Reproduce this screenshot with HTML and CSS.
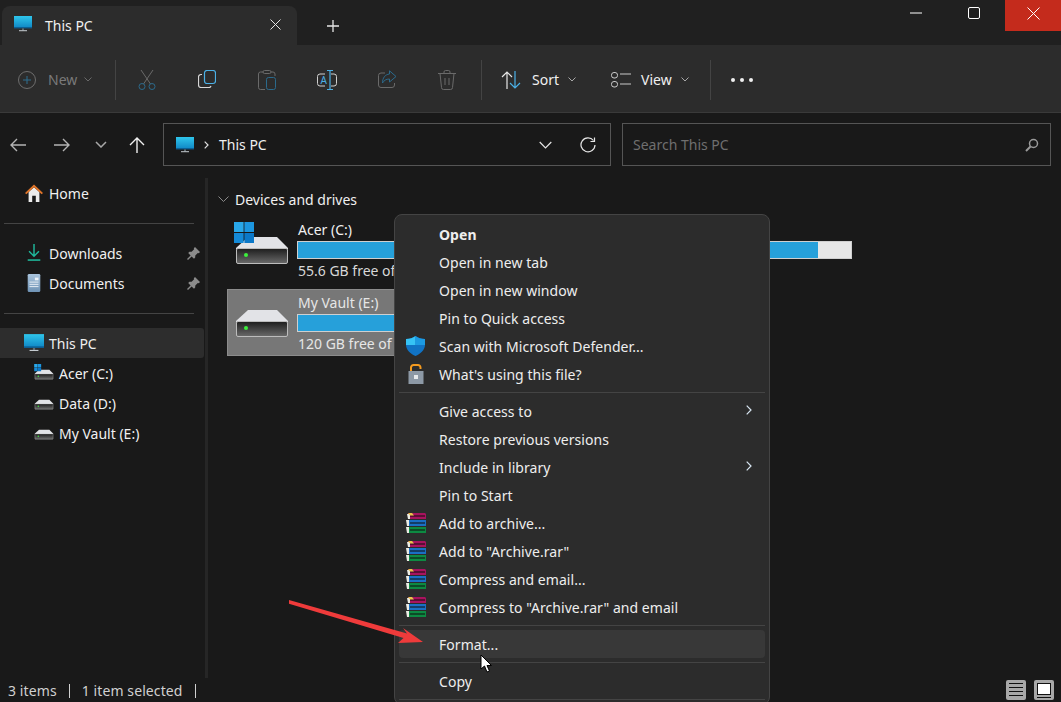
FILE: index.html
```html
<!DOCTYPE html>
<html lang="en">
<head>
  <meta charset="UTF-8">
  <meta name="viewport" content="width=device-width, initial-scale=1.0">
  <title>This PC</title>
  <link rel="stylesheet" href="styles.css">
</head>
<body>

  <!-- shared icons -->
  <svg class="defs" width="0" height="0">
    <defs>
      <linearGradient id="screen" x1="0" y1="0" x2="0" y2="1">
        <stop offset="0" stop-color="#2fc6ec"/>
        <stop offset="1" stop-color="#0f86c4"/>
      </linearGradient>
      <linearGradient id="driveFace" x1="0" y1="0" x2="0" y2="1">
        <stop offset="0" stop-color="#1d1d1d"/>
        <stop offset="1" stop-color="#6a6a6a"/>
      </linearGradient>
      <linearGradient id="page" x1="0" y1="0" x2="0" y2="1">
        <stop offset="0" stop-color="#a9c4dd"/>
        <stop offset="1" stop-color="#6f93b5"/>
      </linearGradient>
      <symbol id="monitor" viewBox="0 0 18 16">
        <rect x="0" y="0" width="18" height="12" fill="url(#screen)"/>
        <rect x="0" y="11" width="18" height="1.4" fill="#0b5f94"/>
        <rect x="8" y="12.4" width="2" height="2" fill="#5e6a72"/>
        <rect x="5" y="14.2" width="8" height="1" fill="#c5cbd0"/>
      </symbol>
      <symbol id="drive" viewBox="0 0 56 48">
        <path d="M14 15H43L54 26V27H2V26Z" fill="#e2e3e7"/>
        <rect x="2.5" y="26.5" width="51" height="15" rx="1.5" fill="url(#driveFace)" stroke="#bcbcbc"/>
        <circle cx="12" cy="33" r="2" fill="#3cf03c"/>
      </symbol>
      <symbol id="winlogo" viewBox="0 0 20 21">
        <rect x="0" y="0" width="9.6" height="10" fill="#29a8ea"/>
        <rect x="10.4" y="0" width="9.6" height="10" fill="#1c96e0"/>
        <rect x="0" y="11" width="9.6" height="10" fill="#148ad8"/>
        <rect x="10.4" y="11" width="9.6" height="10" fill="#0b78c8"/>
      </symbol>
      <symbol id="pin" viewBox="0 0 13 13">
        <path d="M8 0L13 5L11.8 6.2L10.8 5.9L8.3 8.4L8.2 10.6L7 11.8L4.6 9.4L1 13L0 12L3.6 8.4L1.2 6L2.4 4.8L4.6 4.7L7.1 2.2L6.8 1.2Z" fill="#8b8b8b"/>
      </symbol>
      <symbol id="chev" viewBox="0 0 8 5">
        <path d="M.5 .5L4 4L7.5 .5" fill="none" stroke="currentColor"/>
      </symbol>
      <symbol id="rar" viewBox="0 0 20 20">
        <path d="M2 0H19L20 1V6H2Z" fill="#a8135f"/>
        <path d="M2 7H20V13H2Z" fill="#1a6fc4"/>
        <path d="M2 14H20V20H2Z" fill="#0d8a42"/>
        <path d="M1 1H4V6H2ZM0 7H3V13H1ZM0 14H3V20H1Z" fill="#ecece4"/>
        <path d="M4 3H19M4 10H19M4 17H19" stroke="#0d0d0d" stroke-width="1"/>
        <path d="M2 0H6L8 2.500H4Z" fill="#e9c54a"/>
      </symbol>
    </defs>
  </svg>

  <div class="window">

    <div class="tabbar">
      <div class="tab">
        <svg class="tab-icon"><use href="#monitor"/></svg>
        <span class="tab-title">This PC</span>
        <svg class="tab-close" viewBox="0 0 11 11"><path d="M.5 .5L10.5 10.5M10.5 .5L.5 10.5" stroke="#e6e6e6" fill="none"/></svg>
      </div>
      <svg class="tab-plus" viewBox="0 0 12 12"><path d="M6 0V12M0 6H12" stroke="#e6e6e6" stroke-width="1.3" fill="none"/></svg>
      <div class="win-controls">
        <div class="win-btn"><svg width="12" height="12" viewBox="0 0 12 12"><path d="M0 6H12" stroke="#fff"/></svg></div>
        <div class="win-btn"><svg width="12" height="12" viewBox="0 0 12 12"><rect x=".5" y=".5" width="11" height="11" rx="1.5" fill="none" stroke="#fff"/></svg></div>
        <div class="win-btn win-close"><svg width="13" height="13" viewBox="0 0 13 13"><path d="M.5 .5L12.5 12.5M12.5 .5L.5 12.5" stroke="#fff" fill="none"/></svg></div>
      </div>
    </div>

    <div class="toolbar">
      <div class="tool-new">
        <svg width="18" height="18" viewBox="0 0 18 18"><circle cx="9" cy="9" r="8.5" fill="none" stroke="#6e6e6e"/><path d="M9 5V13M5 9H13" stroke="#2f6f8f" fill="none"/></svg>
        <span>New</span>
        <svg class="chev"><use href="#chev"/></svg>
      </div>
      <div class="tool-sep"></div>
      <div class="tool-icons">
        <div class="tool-icon">
          <svg width="18" height="20" viewBox="0 0 18 20"><path d="M3 0L12.5 14M15 0L5.5 14" stroke="#6a6a6a" fill="none"/><circle cx="4" cy="16.5" r="3" stroke="#2b6a8c" fill="none"/><circle cx="14" cy="16.5" r="3" stroke="#2b6a8c" fill="none"/></svg>
        </div>
        <div class="tool-icon">
          <svg width="18" height="18" viewBox="0 0 18 18"><rect x="6.5" y=".5" width="11" height="13" rx="2.5" fill="none" stroke="#4bb0e6" stroke-width="1.2"/><path d="M4 4.5H3A2.5 2.5 0 0 0 .5 7V15A2.5 2.5 0 0 0 3 17.5H10A2.5 2.5 0 0 0 13 16" fill="none" stroke="#d8d8d8" stroke-width="1.2"/></svg>
        </div>
        <div class="tool-icon">
          <svg width="18" height="20" viewBox="0 0 18 20"><path d="M5 2H2.500A2 2 0 0 0 .5 4V17.500A2 2 0 0 0 2.500 19.500H7M13 2H15A2 2 0 0 1 17 4V6" fill="none" stroke="#6a6a6a"/><rect x="5" y=".5" width="8" height="3" rx="1.500" fill="none" stroke="#6a6a6a"/><rect x="8.500" y="7.500" width="9" height="12" rx="2" fill="none" stroke="#2b6a8c"/></svg>
        </div>
        <div class="tool-icon">
          <svg width="20" height="20" viewBox="0 0 20 20"><path d="M8 4H3A2.500 2.500 0 0 0 .5 6.500V13.500A2.500 2.500 0 0 0 3 16H8M14 4H17A2.500 2.500 0 0 1 19.500 6.500V13.500A2.500 2.500 0 0 1 17 16H14" fill="none" stroke="#d0d0d0"/><path d="M10 .5H16M10 19.500H16M13 .5V19.500" fill="none" stroke="#4bb0e6" stroke-width="1.200"/><text class="rename-a" x="3.500" y="13.500">A</text></svg>
        </div>
        <div class="tool-icon">
          <svg width="19" height="18" viewBox="0 0 19 18"><path d="M7 3H3A2.500 2.500 0 0 0 .5 5.500V15A2.500 2.500 0 0 0 3 17.500H14A2.500 2.500 0 0 0 16.500 15V13" fill="none" stroke="#6a6a6a"/><path d="M11.500 .8L18 6.500L11.500 12V9C8 9 6 10.500 4.500 13C4.500 8 7 4.500 11.500 4Z" fill="none" stroke="#2b6a8c"/></svg>
        </div>
        <div class="tool-icon">
          <svg width="18" height="20" viewBox="0 0 18 20"><path d="M0 3.500H18M6 3.500V2A1.500 1.500 0 0 1 7.500 .5H10.500A1.500 1.500 0 0 1 12 2V3.500M2 3.500L3.500 17.500A2 2 0 0 0 5.500 19.500H12.500A2 2 0 0 0 14.500 17.500L16 3.500M7 8V15M11 8V15" fill="none" stroke="#6a6a6a"/></svg>
        </div>
      </div>
      <div class="tool-sep tool-sep-b"></div>
      <div class="tool-btn tool-sort">
        <svg width="20" height="18" viewBox="0 0 20 18"><path d="M6 18V1M1 6L6 1L11 6" fill="none" stroke="#e6e6e6" stroke-width="1.200"/><path d="M14 0V17M9 12L14 17L19 12" fill="none" stroke="#4bb0e6" stroke-width="1.200"/></svg>
        <span class="tool-label">Sort</span>
        <svg class="chev"><use href="#chev"/></svg>
      </div>
      <div class="tool-btn tool-view">
        <svg width="20" height="16" viewBox="0 0 20 16"><rect x=".5" y=".5" width="6" height="5.500" rx="2.500" fill="none" stroke="#c8c8c8"/><rect x=".5" y="9.500" width="6" height="5.500" rx="2.500" fill="none" stroke="#c8c8c8"/><path d="M9 2H20M9 12H20" stroke="#c8c8c8" fill="none"/></svg>
        <span class="tool-label">View</span>
        <svg class="chev"><use href="#chev"/></svg>
      </div>
      <div class="tool-sep tool-sep-c"></div>
      <div class="tool-more"><i></i><i></i><i></i></div>
    </div>

    <div class="addressbar">
      <div class="nav">
        <svg class="nav-back" width="16" height="14" viewBox="0 0 16 14"><path d="M16 7H1M7 1L1 7L7 13" fill="none" stroke="#b4b4b4" stroke-width="1.400"/></svg>
        <svg class="nav-fwd" width="16" height="14" viewBox="0 0 16 14"><path d="M0 7H15M9 1L15 7L9 13" fill="none" stroke="#b4b4b4" stroke-width="1.400"/></svg>
        <svg class="nav-down" width="12" height="7" viewBox="0 0 12 7"><path d="M1 1L6 6L11 1" fill="none" stroke="#a8a8a8" stroke-width="1.500"/></svg>
        <svg class="nav-up" width="16" height="16" viewBox="0 0 16 16"><path d="M8 16V1M1 8L8 1L15 8" fill="none" stroke="#f0f0f0" stroke-width="1.400"/></svg>
      </div>
      <div class="address">
        <svg class="addr-icon"><use href="#monitor"/></svg>
        <svg class="addr-sep" width="5" height="8" viewBox="0 0 5 8"><path d="M.7 .7L4 4L.7 7.300" fill="none" stroke="#e0e0e0" stroke-width="1.200"/></svg>
        <span class="addr-text">This PC</span>
        <svg class="addr-chev" width="13" height="8" viewBox="0 0 13 8"><path d="M.7 1L6.500 6.800L12.300 1" fill="none" stroke="#e6e6e6" stroke-width="1.200"/></svg>
        <svg class="addr-refresh" width="16" height="16" viewBox="0 0 16 16"><path d="M13.500 3.500A7 7 0 1 0 15 8" fill="none" stroke="#e6e6e6" stroke-width="1.200"/><path d="M14.500 .5V4.500H10.500" fill="none" stroke="#e6e6e6" stroke-width="1.200"/></svg>
      </div>
      <div class="search">
        <span>Search This PC</span>
        <svg width="14" height="14" viewBox="0 0 14 14"><circle cx="8.500" cy="5.500" r="4" fill="none" stroke="#9a9a9a" stroke-width="1.500"/><path d="M5.500 8.500L1 13" stroke="#9a9a9a" stroke-width="2" fill="none"/></svg>
      </div>
    </div>

    <div class="main">
      <nav class="sidebar">
        <div class="side-row">
          <svg class="side-icon" viewBox="0 0 20 20">
            <path d="M4 9L10 3.500L16 9V20H12V13H8V20H4Z" fill="#ececec"/>
            <path d="M0 10L10 .5L20 10L18.500 11.500L10 3.500L1.500 11.500Z" fill="#e0752a"/>
          </svg>
          <span>Home</span>
        </div>
        <div class="side-sep"></div>
        <div class="side-row">
          <svg class="side-icon" viewBox="0 0 20 20"><path d="M10 0V13M4.500 8L10 13.500L15.500 8" fill="none" stroke="#1fb99c" stroke-width="1.600"/><rect x="3" y="17" width="14" height="1.700" fill="#1fb99c"/></svg>
          <span>Downloads</span>
          <svg class="pin"><use href="#pin"/></svg>
        </div>
        <div class="side-row">
          <svg class="side-icon" viewBox="0 0 20 20"><rect x="3" y="0" width="14" height="20" rx="1.500" fill="url(#page)"/><path d="M5 9H15M5 11.500H15M5 14H15" stroke="#eef3f8"/><rect x="11" y="4" width="4" height="3" fill="#eef3f8"/></svg>
          <span>Documents</span>
          <svg class="pin"><use href="#pin"/></svg>
        </div>
        <div class="side-sep"></div>
        <div class="side-row side-active">
          <svg class="side-icon"><use href="#monitor"/></svg>
          <span>This PC</span>
        </div>
        <div class="side-row side-sub">
          <svg class="side-icon"><use href="#drive"/><use href="#winlogo" width="7.500" height="7.500"/></svg>
          <span>Acer (C:)</span>
        </div>
        <div class="side-row side-sub">
          <svg class="side-icon"><use href="#drive"/></svg>
          <span>Data (D:)</span>
        </div>
        <div class="side-row side-sub">
          <svg class="side-icon"><use href="#drive"/></svg>
          <span>My Vault (E:)</span>
        </div>
      </nav>
      <div class="divider"></div>
      <section class="content">
        <div class="group-head">
          <svg width="11" height="6" viewBox="0 0 11 6"><path d="M.5 .5L5.500 5.500L10.500 .5" fill="none" stroke="#8a8a8a"/></svg>
          <span>Devices and drives</span>
        </div>
        <div class="drive-tile">
          <svg class="drive-icon"><use href="#drive"/><use href="#winlogo" width="20" height="21"/></svg>
          <div class="drive-info">
            <div class="drive-name">Acer (C:)</div>
            <div class="drive-bar"><div class="drive-used drive-used-c"></div></div>
            <div class="drive-free">55.6 GB free of 476 GB</div>
          </div>
        </div>
        <div class="drive-tile drive-selected">
          <svg class="drive-icon"><use href="#drive"/></svg>
          <div class="drive-info">
            <div class="drive-name">My Vault (E:)</div>
            <div class="drive-bar"><div class="drive-used drive-used-e"></div></div>
            <div class="drive-free">120 GB free of 465 GB</div>
          </div>
        </div>
      </section>
    </div>

    <div class="statusbar">
      <span>3 items</span>
      <span class="status-sep"></span>
      <span>1 item selected</span>
      <span class="status-sep"></span>
      <div class="status-views">
        <div class="view-btn view-list"><i></i><i></i><i></i><i></i></div>
        <div class="view-btn view-tile"><i></i></div>
      </div>
    </div>

    <!-- Menu de contexto -->
    <div class="menu">
      <div class="menu-row menu-bold"><span class="menu-icon"></span>Open</div>
      <div class="menu-row"><span class="menu-icon"></span>Open in new tab</div>
      <div class="menu-row"><span class="menu-icon"></span>Open in new window</div>
      <div class="menu-row"><span class="menu-icon"></span>Pin to Quick access</div>
      <div class="menu-row">
        <span class="menu-icon">
          <svg width="19" height="20" viewBox="0 0 19 20"><path d="M9.500 0C12 2 15 3 19 3V9C19 14 14 18 9.500 20C5 18 0 14 0 9V3C4 3 7 2 9.500 0Z" fill="#1173c4"/><path d="M9.500 0C7 2 4 3 0 3V9H9.500Z" fill="#36c3f5"/><path d="M9.500 0C12 2 15 3 19 3V9H9.500Z" fill="#1c9ae2"/></svg>
        </span>
        Scan with Microsoft Defender...
      </div>
      <div class="menu-row">
        <span class="menu-icon">
          <svg width="20" height="20" viewBox="0 0 20 20"><path d="M5 8V3.500A2.500 2.500 0 0 1 7.500 1H12A2.500 2.500 0 0 1 14.500 3.500V5" fill="none" stroke="#f39a1f" stroke-width="2"/><rect x="2.500" y="7" width="15" height="13" fill="#8d99a6"/><rect x="8" y="11" width="4" height="4" fill="#e6e9ec"/></svg>
        </span>
        What's using this file?
      </div>
      <div class="menu-sep"></div>
      <div class="menu-row"><span class="menu-icon"></span>Give access to<svg class="menu-arrow" width="6" height="10" viewBox="0 0 6 10"><path d="M.7 .7L5 5L.7 9.300" fill="none" stroke="#d8e6f2" stroke-width="1.200"/></svg></div>
      <div class="menu-row"><span class="menu-icon"></span>Restore previous versions</div>
      <div class="menu-row"><span class="menu-icon"></span>Include in library<svg class="menu-arrow" width="6" height="10" viewBox="0 0 6 10"><path d="M.7 .7L5 5L.7 9.300" fill="none" stroke="#d8e6f2" stroke-width="1.200"/></svg></div>
      <div class="menu-row"><span class="menu-icon"></span>Pin to Start</div>
      <div class="menu-row"><span class="menu-icon"><svg class="rar-icon"><use href="#rar"/></svg></span>Add to archive...</div>
      <div class="menu-row"><span class="menu-icon"><svg class="rar-icon"><use href="#rar"/></svg></span>Add to "Archive.rar"</div>
      <div class="menu-row"><span class="menu-icon"><svg class="rar-icon"><use href="#rar"/></svg></span>Compress and email...</div>
      <div class="menu-row"><span class="menu-icon"><svg class="rar-icon"><use href="#rar"/></svg></span>Compress to "Archive.rar" and email</div>
      <div class="menu-sep"></div>
      <div class="menu-row menu-hover"><span class="menu-icon"></span>Format...</div>
      <div class="menu-sep"></div>
      <div class="menu-row"><span class="menu-icon"></span>Copy</div>
      <div class="menu-sep"></div>
    </div>

    <!-- seta vermelha e cursor -->
    <svg class="red-arrow" width="140" height="50" viewBox="0 0 140 50">
      <path d="M0 0L118 33.500L114 28L134 42L109 43L114.500 38L-1 3.500Z" fill="#ef3b3b"/>
    </svg>
    <svg class="cursor" width="13" height="19" viewBox="0 0 13 19">
      <path d="M1 1V15L4.500 12L7 18L9.500 17L7 11.500H11.500Z" fill="#fff" stroke="#000"/>
    </svg>
  </div>

</body>
</html>
```

FILE: styles.css
```css
* {
  margin: 0;
  padding: 0;
  box-sizing: border-box;
}

body {
  background-color: #191919;
  font-family: "Noto Sans", Arial, sans-serif;
  font-size: 14px;
  color: #f0f0f0;
}

svg {
  display: block;
  flex-shrink: 0;
}

.defs {
  position: absolute;
}

.window {
  position: relative;
  width: 1061px;
  height: 702px;
  overflow: hidden;
  display: flex;
  flex-direction: column;
}

/* Tabs */
.tabbar {
  height: 45px;
  background-color: #202020;
  display: flex;
  align-items: flex-start;
  padding-left: 2px;
}

.tab {
  width: 295px;
  height: 39px;
  margin-top: 6px;
  background-color: #2c2c2c;
  border-radius: 8px 8px 0 0;
  display: flex;
  align-items: center;
  padding-left: 12px;
}

.tab-icon {
  width: 18px;
  height: 16px;
  margin-top: -3px;
}

.tab-title {
  margin-left: 13px;
  margin-top: -1px;
}

.tab-close {
  width: 11px;
  height: 11px;
  margin-left: auto;
  margin-right: 16px;
  margin-top: -3px;
}

.tab-plus {
  width: 12px;
  height: 12px;
  margin-top: 20px;
  margin-left: 30px;
}

.win-controls {
  margin-left: auto;
  display: flex;
}

.win-btn {
  width: 58px;
  height: 31px;
  display: flex;
  align-items: center;
  justify-content: center;
  padding-bottom: 6px;
  padding-right: 4px;
}

.win-close {
  width: 56px;
  background-color: #c42b1c;
  padding-bottom: 5px;
  padding-right: 0;
}

/* Toolbar */
.toolbar {
  height: 68px;
  background-color: #2c2c2c;
  border-bottom: 1px solid #3a3a3a;
  display: flex;
  align-items: center;
  padding-left: 18px;
  padding-top: 2px;
  color: #f0f0f0;
}

.chev {
  width: 8px;
  height: 5px;
  color: #a8a8a8;
}

.tool-new {
  width: 97px;
  display: flex;
  align-items: center;
  color: #7a7a7a;
}

.tool-new span {
  margin-left: 12px;
  margin-right: 7px;
}

.tool-new .chev {
  color: #6a6a6a;
}

.tool-sep {
  width: 1px;
  height: 40px;
  background-color: #444;
}

.tool-sep-b {
  margin-left: 4px;
}

.tool-sep-c {
  margin-left: 21px;
}

.tool-icons {
  display: flex;
  margin-left: 1px;
}

.tool-icon {
  width: 60px;
  display: flex;
  justify-content: center;
}

.rename-a {
  font-family: "Noto Sans", Arial, sans-serif;
  font-size: 10px;
  fill: #4bb0e6;
}

.tool-btn {
  display: flex;
  align-items: center;
}

.tool-label {
  margin-right: 9px;
}

.tool-sort {
  margin-left: 19px;
}

.tool-sort .tool-label {
  margin-left: 11px;
}

.tool-view {
  margin-left: 35px;
}

.tool-view .tool-label {
  margin-left: 10px;
}

.tool-more {
  margin-left: 20px;
  display: flex;
  gap: 5px;
}

.tool-more i {
  width: 4px;
  height: 4px;
  border-radius: 50%;
  background-color: #f0f0f0;
}

/* Address bar */
.addressbar {
  height: 65px;
  background-color: #191919;
  display: flex;
  align-items: flex-start;
  padding-top: 10px;
}

.nav {
  width: 163px;
  height: 43px;
  display: flex;
  align-items: center;
}

.nav-back {
  margin-left: 10px;
}

.nav-fwd {
  margin-left: 28px;
}

.nav-down {
  margin-left: 25px;
}

.nav-up {
  margin-left: 22px;
}

.address {
  width: 448px;
  height: 43px;
  border: 1px solid #555;
  display: flex;
  align-items: center;
  padding-left: 12px;
}

.addr-icon {
  width: 18px;
  height: 16px;
}

.addr-sep {
  margin-left: 10px;
}

.addr-text {
  margin-left: 10px;
}

.addr-chev {
  margin-left: auto;
}

.addr-refresh {
  margin-left: 28px;
  margin-right: 14px;
}

.search {
  width: 429px;
  height: 43px;
  margin-left: 11px;
  border: 1px solid #555;
  display: flex;
  align-items: center;
  justify-content: space-between;
  padding: 0 11px 0 10px;
  color: #6f6f6f;
}

/* Sidebar + content */
.main {
  flex: 1;
  display: flex;
  min-height: 0;
  background-color: #191919;
}

.sidebar {
  width: 205px;
}

.side-row {
  width: 204px;
  height: 30px;
  display: flex;
  align-items: center;
  gap: 5px;
  padding-left: 24px;
  padding-right: 4px;
  border-radius: 0 3px 3px 0;
}

.side-icon {
  width: 20px;
  height: 18px;
}

.side-sub {
  padding-left: 34px;
}

.side-active {
  background-color: #2d2d2d;
}

.side-sep {
  height: 1px;
  width: 190px;
  margin: 15px 0 14px 4px;
  background-color: #444;
}

.pin {
  width: 13px;
  height: 13px;
  margin-left: auto;
}

.divider {
  width: 3px;
  background-color: #262626;
}

.content {
  flex: 1;
  padding-top: 11px;
  padding-left: 10px;
}

.group-head {
  height: 20px;
  display: flex;
  align-items: center;
  gap: 6px;
  margin-bottom: 7px;
}

.drive-tile {
  width: 640px;
  height: 67px;
  margin-left: 9px;
  margin-bottom: 6px;
  padding-left: 7px;
  display: flex;
  align-items: flex-start;
  border: 1px solid transparent;
}

.drive-selected {
  width: 500px;
  background-color: #777;
  border-color: #8c8c8c;
}

.drive-icon {
  width: 56px;
  height: 48px;
  margin-top: 5px;
  margin-left: -1px;
}

.drive-info {
  flex: 1;
  padding-left: 7px;
  padding-top: 3px;
}

.drive-name {
  height: 20px;
  line-height: 20px;
  margin-left: 1px;
}

.drive-selected .drive-name,
.drive-selected .drive-free {
  color: #e6e6e6;
}

.drive-bar {
  height: 18px;
  margin-top: 1px;
  width: 555px;
  background-color: #e6e6e6;
  border: 1px solid #cfcfcf;
}

.drive-selected .drive-bar {
  width: 430px;
}

.drive-used {
  height: 100%;
  background-color: #26a0da;
}

.drive-used-c {
  width: 94%;
}

.drive-used-e {
  width: 75%;
}

.drive-free {
  height: 20px;
  line-height: 20px;
  margin-top: 2px;
  margin-left: 1px;
  color: #d8d8d8;
  white-space: nowrap;
}

/* Status bar */
.statusbar {
  height: 24px;
  background-color: #191919;
  display: flex;
  align-items: center;
  padding-left: 8px;
  color: #d0d0d0;
  letter-spacing: .1px;
}

.status-sep {
  width: 1px;
  height: 14px;
  margin: 2px 12px 0;
  background-color: #d0d0d0;
}

.status-views {
  margin-left: auto;
  margin-right: 7px;
  display: flex;
  gap: 8px;
}

.view-btn {
  width: 20px;
  height: 20px;
  background-color: #a8a8a8;
  border-radius: 2px;
}

.view-list {
  display: flex;
  flex-direction: column;
  justify-content: center;
  gap: 2px;
  padding: 0 3px;
}

.view-list i {
  height: 1px;
  background-color: #111;
  margin-bottom: 1px;
}

.view-tile {
  padding: 3px;
}

.view-tile i {
  display: block;
  height: 12px;
  background-color: #fff;
  border: 1px solid #111;
  box-shadow: 0 2px 0 #a8a8a8, 0 3px 0 #111;
}

/* Context menu */
.menu {
  position: absolute;
  left: 394px;
  top: 214px;
  width: 376px;
  padding: 5px 4px 0;
  background-color: #2c2c2c;
  border: 1px solid #444;
  border-radius: 8px;
  color: #eee;
  letter-spacing: .05px;
}

.menu-row {
  height: 28px;
  display: flex;
  align-items: center;
  padding-left: 7px;
  padding-right: 13px;
  border-radius: 4px;
  white-space: nowrap;
}

.menu-icon {
  width: 20px;
  height: 20px;
  margin-right: 13px;
  flex-shrink: 0;
}

.rar-icon {
  width: 20px;
  height: 20px;
}

.menu-bold {
  font-weight: 700;
}

.menu-hover {
  background-color: #383838;
}

.menu-arrow {
  margin-left: auto;
  margin-top: -2px;
}

.menu-sep {
  height: 1px;
  margin: 4px 0;
  background-color: #444;
}

.red-arrow {
  position: absolute;
  left: 289px;
  top: 600px;
}

.cursor {
  position: absolute;
  left: 480px;
  top: 654px;
}
```
